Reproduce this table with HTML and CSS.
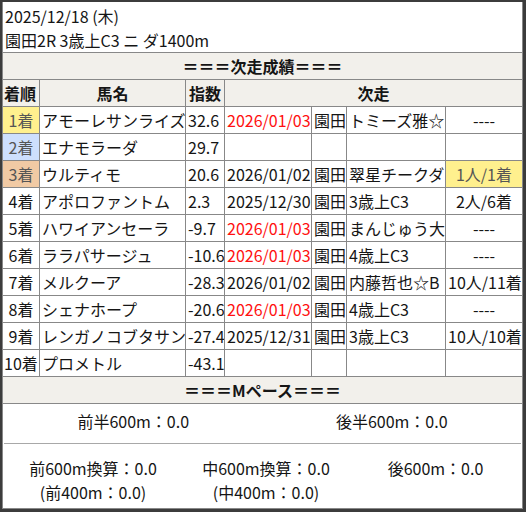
FILE: index.html
```html
<!DOCTYPE html>
<html lang="ja">
<head>
<meta charset="utf-8">
<title>次走成績</title>
<link rel="stylesheet" href="styles.css">
</head>
<body>
<div class="frame">
  <div class="sheet">
    <div class="title">
      <div>2025/12/18 (木)</div>
      <div>園田2R 3歳上C3 ニ ダ1400m</div>
    </div>
    <div class="grid">
      <div class="band">＝＝＝次走成績＝＝＝</div>
      <div class="hd">着順</div>
      <div class="hd c">馬名</div>
      <div class="hd c">指数</div>
      <div class="hd c span4">次走</div>

      <div class="rank gold">1着</div><div>アモーレサンライズ</div><div>32.6</div><div class="red">2026/01/03</div><div>園田</div><div>トミーズ雅☆</div><div class="c">----</div>
      <div class="rank blue">2着</div><div>エナモラーダ</div><div>29.7</div><div></div><div></div><div></div><div></div>
      <div class="rank peach">3着</div><div>ウルティモ</div><div>20.6</div><div>2026/01/02</div><div>園田</div><div>翠星チークダ</div><div class="c gold">1人/1着</div>
      <div class="rank">4着</div><div>アポロファントム</div><div>2.3</div><div>2025/12/30</div><div>園田</div><div>3歳上C3</div><div class="c">2人/6着</div>
      <div class="rank">5着</div><div>ハワイアンセーラ</div><div>-9.7</div><div class="red">2026/01/03</div><div>園田</div><div>まんじゅう大</div><div class="c">----</div>
      <div class="rank">6着</div><div>ララパサージュ</div><div>-10.6</div><div class="red">2026/01/03</div><div>園田</div><div>4歳上C3</div><div class="c">----</div>
      <div class="rank">7着</div><div>メルクーア</div><div>-28.3</div><div>2026/01/02</div><div>園田</div><div>内藤哲也☆B</div><div class="c">10人/11着</div>
      <div class="rank">8着</div><div>シェナホープ</div><div>-20.6</div><div class="red">2026/01/03</div><div>園田</div><div>4歳上C3</div><div class="c">----</div>
      <div class="rank">9着</div><div>レンガノコブタサン</div><div>-27.4</div><div>2025/12/31</div><div>園田</div><div>3歳上C3</div><div class="c">10人/10着</div>
      <div class="rank">10着</div><div>プロメトル</div><div>-43.1</div><div></div><div></div><div></div><div></div>

      <div class="band">＝＝＝Mペース＝＝＝</div>
      <div class="pace">
        <div class="halves">
          <div>前半600m：0.0</div>
          <div>後半600m：0.0</div>
        </div>
        <div class="thirds">
          <div>前600m換算：0.0<br>(前400m：0.0)</div>
          <div>中600m換算：0.0<br>(中400m：0.0)</div>
          <div>後600m：0.0</div>
        </div>
      </div>
    </div>
  </div>
</div>
</body>
</html>
```
FILE: styles.css
```css
html, body {
  margin: 0;
  padding: 0;
}
body {
  background: #3c3c3c;
  font-family: "Noto Sans CJK JP", "Noto Sans", sans-serif;
  font-size: 16px;
  color: #151515;
}
.frame {
  width: 526px;
  height: 512px;
  box-sizing: border-box;
  padding: 2px 3px 3px 2px;
  background: #3c3c3c;
}
.sheet {
  height: 507px;
  box-sizing: border-box;
  background: #ffffff;
  border: 1px solid #888888;
  border-top: 0;
  display: flex;
  flex-direction: column;
}
.title {
  height: 51px;
  box-sizing: border-box;
  padding: 2px 0 1px 2px;
  line-height: 24px;
  border-bottom: 1px solid #888888;
}
.grid {
  flex: 1;
  display: grid;
  grid-template-columns: 36px 145px 38px 86px 34px 98px 76px;
  grid-template-rows: repeat(13, 26px) 1fr;
  gap: 1px;
  background: #888888;
}
.grid > div {
  background: #ffffff;
  line-height: 26px;
  padding: 0 2px;
  white-space: nowrap;
  overflow: hidden;
}
.grid > .band {
  grid-column: 1 / -1;
  background: #f2f0eb;
  font-weight: bold;
  text-align: center;
}
.grid > .hd {
  background: #f2f0eb;
  font-weight: bold;
  padding: 0 1px;
}
.c {
  text-align: center;
}
.span4 {
  grid-column: span 4;
}
.grid > .rank {
  text-align: center;
  padding: 0;
}
.grid > .gold {
  background: #fff08e;
  color: #555555;
}
.grid > .blue {
  background: #cddffd;
  color: #555555;
}
.grid > .peach {
  background: #f1caa4;
  color: #555555;
}
.red {
  color: #ff1010;
}
.grid > .pace {
  grid-column: 1 / -1;
  padding: 0;
  line-height: 24px;
  display: flex;
  flex-direction: column;
}
.halves {
  display: grid;
  grid-template-columns: 1fr 1fr;
  height: 40px;
  box-sizing: border-box;
  padding-top: 5px;
  text-align: center;
  margin: 0 1px;
  border-bottom: 1px solid #a8a8a8;
}
.thirds {
  display: grid;
  grid-template-columns: 180px 166px 1fr;
  padding-top: 12px;
  text-align: center;
}
```
